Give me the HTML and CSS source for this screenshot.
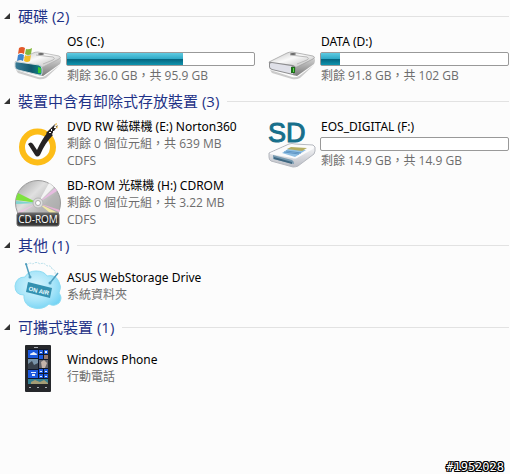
FILE: index.html
```html
<!DOCTYPE html>
<html lang="zh-Hant">
<head>
<meta charset="UTF-8">
<meta name="viewport" content="width=device-width, initial-scale=1.0">
<title>電腦</title>
<link rel="stylesheet" href="styles.css">
</head>
<body>
<main class="explorer">
    <!-- Hard disks -->
    <details class="group" open>
        <summary class="group-header">
            <svg class="arrow" viewBox="0 0 6 6"><path d="M6 0V6H0Z" fill="#333"/></svg>
            <span class="group-title">硬碟 (2)</span>
        </summary>
        <ul class="items">
            <li class="item">
                <svg class="icon" viewBox="0 0 48 48">
                    <defs>
                        <linearGradient id="metal" x1="0" y1="0" x2="1" y2="1">
                            <stop offset="0" stop-color="#bcbcbc"/>
                            <stop offset=".45" stop-color="#fafafa"/>
                            <stop offset="1" stop-color="#b4b4b4"/>
                        </linearGradient>
                        <linearGradient id="side" x1="0" y1="0" x2="0" y2="1">
                            <stop offset="0" stop-color="#d8d8d8"/>
                            <stop offset="1" stop-color="#7c7c7c"/>
                        </linearGradient>
                        <linearGradient id="teal" x1="0" y1="0" x2="1" y2="0">
                            <stop offset="0" stop-color="#3c7d98"/>
                            <stop offset=".6" stop-color="#12576d"/>
                            <stop offset="1" stop-color="#0c8a86"/>
                        </linearGradient>
                    </defs>
                    <path d="M2 35L24 42Q28 43 31 41L46 30L32 43Q28 45 24 44L4 38Z" fill="#999" opacity=".5"/>
                    <path d="M25 32L46 22Q48 25 46 29L29 41L25 40Z" fill="url(#side)"/>
                    <path d="M1 27L19 18Q21 17 24 17L45 21Q48 22 45 24L29 32Q27 33 24 32L2 29Z" fill="url(#metal)" stroke="#aaa" stroke-width=".7"/>
                    <path d="M22 20L39 22Q42 23 39 25L29 29" fill="none" stroke="#b9b9b9"/>
                    <ellipse cx="27" cy="19" rx="3" ry="1" fill="#666"/>
                    <path d="M1 28Q1 26 4 27L25 30Q28 31 28 34V38Q28 41 25 40L4 35Q1 34 1 32Z" fill="url(#teal)" stroke="#cfd8da"/>
                    <path d="M24 32L27 33V38L24 38Z" fill="#36c72f"/>
                    <path d="M5 13Q8 11 11 13L10 19Q7 17 4 19Z" fill="#e2592b"/>
                    <path d="M12 14Q15 15 18 13L17 19Q14 21 11 19Z" fill="#83b83b"/>
                    <path d="M4 20Q7 18 10 20L9 26Q6 24 3 26Z" fill="#3c85cf"/>
                    <path d="M11 20Q14 22 17 20L16 26Q13 28 10 26Z" fill="#f3bd28"/>
                </svg>
                <div class="info">
                    <a class="name" href="#c">OS (C:)</a>
                    <div class="bar" role="img" aria-label="OS (C:)"><div class="bar-used" style="width: 62%"></div></div>
                    <div class="detail">剩餘 36.0 GB，共 95.9 GB</div>
                </div>
            </li>
            <li class="item">
                <svg class="icon" viewBox="0 0 48 48">
                    <path d="M2 35L24 42Q28 43 31 41L46 30L32 43Q28 45 24 44L4 38Z" fill="#999" opacity=".5"/>
                    <path d="M25 32L46 22Q48 25 46 29L29 41L25 40Z" fill="url(#side)"/>
                    <path d="M1 27L19 18Q21 17 24 17L45 21Q48 22 45 24L29 32Q27 33 24 32L2 29Z" fill="url(#metal)" stroke="#999" stroke-width=".7"/>
                    <path d="M22 20L39 22Q42 23 39 25L29 29" fill="none" stroke="#b9b9b9"/>
                    <ellipse cx="25" cy="19" rx="3" ry="1" fill="#666"/>
                    <path d="M1 28Q1 26 4 27L25 30Q28 31 28 34V38Q28 41 25 40L4 35Q1 34 1 32Z" fill="#8d8d8f"/>
                    <path d="M2 29Q2 28 4 28L23 31Q25 32 25 34V39L4 34Q2 33 2 32Z" fill="#dfe0e8"/>
                    <path d="M23 32L27 32V38L23 38Z" fill="#1f6e1c"/>
                    <path d="M25 33H26V37H25Z" fill="#5be04c"/>
                </svg>
                <div class="info">
                    <a class="name" href="#d">DATA (D:)</a>
                    <div class="bar" role="img" aria-label="DATA (D:)"><div class="bar-used" style="width: 10%"></div></div>
                    <div class="detail">剩餘 91.8 GB，共 102 GB</div>
                </div>
            </li>
        </ul>
    </details>

    <!-- Removable storage -->
    <details class="group" open>
        <summary class="group-header">
            <svg class="arrow" viewBox="0 0 6 6"><path d="M6 0V6H0Z" fill="#333"/></svg>
            <span class="group-title">裝置中含有卸除式存放裝置 (3)</span>
        </summary>
        <ul class="items">
            <li class="item">
                <svg class="icon" viewBox="0 0 48 48">
                    <circle cx="23.500" cy="27" r="15.500" fill="#fff" stroke="#fdbd18" stroke-width="6"/>
                    <path d="M14 24Q17 21 19 24L23 30Q28 19 34 12L39 15Q31 23 26 35Q23 38 21 35Z" fill="#262324"/>
                    <path d="M32 13L41 4L40 8L44 5L36 17Z" fill="#262324"/>
                    <path d="M37 9h1v2h-1zM40 7h2v1h-2zM35 12h2v1h-2zM39 11h1v2h-1z" fill="#fff"/>
                    <path d="M41 4l2-1-1 3zM42 7l2-1-1 3z" fill="#e6ae35"/>
                </svg>
                <div class="info">
                    <a class="name" href="#e">DVD RW 磁碟機 (E:) Norton360</a>
                    <div class="detail">剩餘 0 個位元組，共 639 MB</div>
                    <div class="detail">CDFS</div>
                </div>
            </li>
            <li class="item">
                <svg class="icon" viewBox="0 0 48 48">
                    <defs>
                        <linearGradient id="sdBody" x1="0" y1="0" x2="0" y2="1">
                            <stop offset="0" stop-color="#fff"/>
                            <stop offset="1" stop-color="#b9bcc4"/>
                        </linearGradient>
                    </defs>
                    <path d="M1 33L21 24Q24 23 27 24L45 25Q48 26 47 31L46 34L30 46Q28 47 25 47L3 41Q1 40 1 37Z" fill="url(#sdBody)" stroke="#b5b8bf"/>
                    <path d="M2 33L21 25L45 26Q47 27 45 29L29 38Q27 39 24 38L2 34Z" fill="#fbfbfc"/>
                    <path d="M14 33L20 29L38 30L27 37Z" fill="#8fbfe4"/>
                    <path d="M19 29L23 27L39 28L34 31Z" fill="#b4ad61"/>
                    <path d="M16 32l15 2M18 31l15 2" stroke="#5f95c4" fill="none"/>
                    <path d="M5 35L24 40Q26 41 26 44L5 39Z" fill="#7599b0"/>
                    <path d="M6 37L24 42V44L6 39Z" fill="#3f6781"/>
                    <text class="sd-text" x="0" y="22">SD</text>
                </svg>
                <div class="info">
                    <a class="name" href="#f">EOS_DIGITAL (F:)</a>
                    <div class="bar" role="img" aria-label="EOS_DIGITAL (F:)"></div>
                    <div class="detail">剩餘 14.9 GB，共 14.9 GB</div>
                </div>
            </li>
            <li class="item">
                <svg class="icon" viewBox="0 0 48 48">
                    <defs>
                        <linearGradient id="disc" x1="0" y1="0" x2="1" y2="1">
                            <stop offset="0" stop-color="#9b9b9b"/>
                            <stop offset=".35" stop-color="#e0e0e0"/>
                            <stop offset=".6" stop-color="#b6b6b6"/>
                            <stop offset="1" stop-color="#a3a3a3"/>
                        </linearGradient>
                        <linearGradient id="label" x1="0" y1="0" x2="0" y2="1">
                            <stop offset="0" stop-color="#6a6a6a"/>
                            <stop offset=".5" stop-color="#222"/>
                            <stop offset="1" stop-color="#444"/>
                        </linearGradient>
                    </defs>
                    <circle cx="24" cy="24" r="22.500" fill="url(#disc)" stroke="#999"/>
                    <path d="M24 24L4 14Q2 18 2 21Z" fill="#7ee23e"/>
                    <path d="M24 24L2 22V25Z" fill="#7fd5cf"/>
                    <path d="M24 24L35 4L40 8Z" fill="#f3f3f3"/>
                    <path d="M24 24L41 9L43 12Z" fill="#e6bce0"/>
                    <path d="M24 24L44 34L41 38Z" fill="#f1e7a6"/>
                    <path d="M24 24L46 31L45 33Z" fill="#e7b2d5"/>
                    <path d="M24 24L5 35L4 33Z" fill="#e9c6e2"/>
                    <circle cx="24" cy="24" r="5" fill="#ddd" stroke="#b5b5b5"/>
                    <circle cx="24" cy="24" r="2.500" fill="#fff" stroke="#aaa"/>
                    <rect x="3" y="34" width="42" height="13" rx="2" fill="url(#label)" stroke="#666"/>
                    <text class="disc-text" x="24" y="44">CD-ROM</text>
                </svg>
                <div class="info">
                    <a class="name" href="#h">BD-ROM 光碟機 (H:) CDROM</a>
                    <div class="detail">剩餘 0 個位元組，共 3.22 MB</div>
                    <div class="detail">CDFS</div>
                </div>
            </li>
        </ul>
    </details>

    <!-- Other -->
    <details class="group" open>
        <summary class="group-header">
            <svg class="arrow" viewBox="0 0 6 6"><path d="M6 0V6H0Z" fill="#333"/></svg>
            <span class="group-title">其他 (1)</span>
        </summary>
        <ul class="items">
            <li class="item">
                <svg class="icon" viewBox="0 0 48 48">
                    <defs>
                        <radialGradient id="cloud" cx=".45" cy=".4" r=".65">
                            <stop offset="0" stop-color="#d9f5fd"/>
                            <stop offset=".6" stop-color="#a8e5f9"/>
                            <stop offset="1" stop-color="#74d3f4"/>
                        </radialGradient>
                    </defs>
                    <path d="M13 3Q15 0 19 2Q22-1 26 2Q30 0 33 4Q37 3 38 7Q42 8 41 12" fill="none" stroke="#b5dfeb" stroke-dasharray="2 1"/>
                    <path d="M10 33Q1 33 1 24Q2 15 11 15Q14 9 22 9Q30 9 33 14Q42 12 45 20Q48 25 45 31Q49 36 45 41Q40 45 35 42Q29 48 20 46Q11 44 10 36Z" fill="url(#cloud)" stroke="#8edcf3"/>
                    <path d="M12 2L16 15M44 11L36 21" fill="none" stroke="#4f9dbd" stroke-width="1.500"/>
                    <circle cx="12" cy="2" r="1" fill="#4f9dbd"/>
                    <circle cx="16" cy="15" r="1.500" fill="#4f9dbd"/>
                    <circle cx="36" cy="21" r="1.500" fill="#4f9dbd"/>
                    <path d="M14 20L38 26L36 36L12 30Z" fill="#3391b0"/>
                    <text class="air-text" x="25" y="31" transform="rotate(13 25 28)">ON AIR</text>
                </svg>
                <div class="info">
                    <a class="name" href="#webstorage">ASUS WebStorage Drive</a>
                    <div class="detail">系統資料夾</div>
                </div>
            </li>
        </ul>
    </details>

    <!-- Portable devices -->
    <details class="group" open>
        <summary class="group-header">
            <svg class="arrow" viewBox="0 0 6 6"><path d="M6 0V6H0Z" fill="#333"/></svg>
            <span class="group-title">可攜式裝置 (1)</span>
        </summary>
        <ul class="items">
            <li class="item">
                <svg class="icon" viewBox="0 0 48 48">
                    <rect x="11" y="1" width="26" height="47" rx="1" fill="#25272b"/>
                    <rect x="14" y="5" width="20" height="35" fill="#10182c"/>
                    <path d="M14 6h10v8h-10zM25 6h4v4h-4zM30 6h4v4h-4zM25 11h4v4h-4zM14 26h10v8h-10zM25 25h4v4h-4zM30 25h4v4h-4zM25 30h4v4h-4zM30 30h4v4h-4z" fill="#1c5ae0"/>
                    <path d="M16 11q0-2 2-2q2-2 3 0q2 0 2 2zM17 28h5v1h-5zM18 30h3v2h-3zM26 8h2v1h-2zM31 7h2v2h-2zM26 27h2v1h-2zM31 27h2v1h-2zM26 32h2v1h-2zM31 32h2v1h-2z" fill="#e6eefc"/>
                    <path d="M14 15h10v10h-10z" fill="#7893a8"/>
                    <path d="M14 20l4-3 2 4 4-2v6h-10z" fill="#38414c"/>
                    <path d="M25 16h9v8h-9z" fill="#65646b"/>
                    <path d="M27 18l3-2 3 3-2 5h-3z" fill="#c4b3ab"/>
                    <path d="M30 11h4v4h-4z" fill="#96796d"/>
                    <path d="M14 35h20v5h-20z" fill="#347f91"/>
                    <path d="M17 38l4-2 5 2 4-2 4 3v1h-17z" fill="#a49c75"/>
                    <path d="M15 43h2v1h-2zM23 43h2v1h-2zM31 43h2v1h-2zM20 3h4v1h-4z" fill="#a9adb4"/>
                </svg>
                <div class="info">
                    <a class="name" href="#phone">Windows Phone</a>
                    <div class="detail">行動電話</div>
                </div>
            </li>
        </ul>
    </details>
</main>
<div class="stamp">#1952028</div>
</body>
</html>
```

FILE: styles.css
```css
* {
    box-sizing: border-box;
}
body {
    margin: 0;
    min-height: 100vh;
    background-color: #fcfcfc;
    font-family: "Open Sans", "Noto Sans CJK TC", sans-serif;
    font-size: 12px;
    line-height: 17px;
    position: relative;
}
.explorer {
    padding: 6px 1px 0 4px;
}
.group-header {
    display: flex;
    align-items: center;
    gap: 8px;
    height: 20px;
    color: #1e3287;
    font-size: 15px;
    list-style: none;
    cursor: pointer;
}
.group-header::after {
    content: "";
    flex: 1;
    height: 1px;
    background-color: #e2e2e2;
}
.arrow {
    width: 6px;
    height: 6px;
}
.items {
    display: grid;
    grid-template-columns: repeat(auto-fill, minmax(240px, 1fr));
    gap: 8px 13px;
    margin: 0;
    padding: 7px 0 7px 10px;
    list-style: none;
}
.item {
    display: flex;
    align-items: center;
    gap: 4px;
}
.icon {
    width: 48px;
    height: 48px;
    flex-shrink: 0;
    overflow: visible;
}
.info {
    flex: 1;
    min-width: 0;
}
.name,
.detail {
    display: block;
    padding-left: 1px;
    white-space: nowrap;
}
.name {
    color: #000;
    font-family: "Noto Sans", "Noto Sans CJK TC", sans-serif;
    text-decoration: none;
}
.detail {
    color: #6d6d6d;
}
.bar {
    height: 14px;
    margin: 2px 0 1px;
    border: 1px solid #999;
    border-radius: 2px;
    background-color: #fff;
}
.bar-used {
    height: 100%;
    background: linear-gradient(#5fcbe2, #2fa9c6 48%, #04647f 52%, #0f94ae);
}
.sd-text {
    font: 27px "Liberation Sans", sans-serif;
    fill: #176f8b;
    stroke: #176f8b;
}
.disc-text {
    font: 10px "Open Sans", sans-serif;
    fill: #fff;
    text-anchor: middle;
}
.air-text {
    font: bold 6px "Liberation Sans", sans-serif;
    fill: #e8fbff;
    text-anchor: middle;
}
.stamp {
    position: absolute;
    right: 6px;
    bottom: 0;
    color: #fff;
    font: 12px "DejaVu Sans Mono", monospace;
    text-shadow: -1px -1px #000, 1px -1px #000, -1px 1px #000, 1px 1px #000, 0 1px #000, 0 -1px #000, 1px 0 #000, -1px 0 #000;
}
```
